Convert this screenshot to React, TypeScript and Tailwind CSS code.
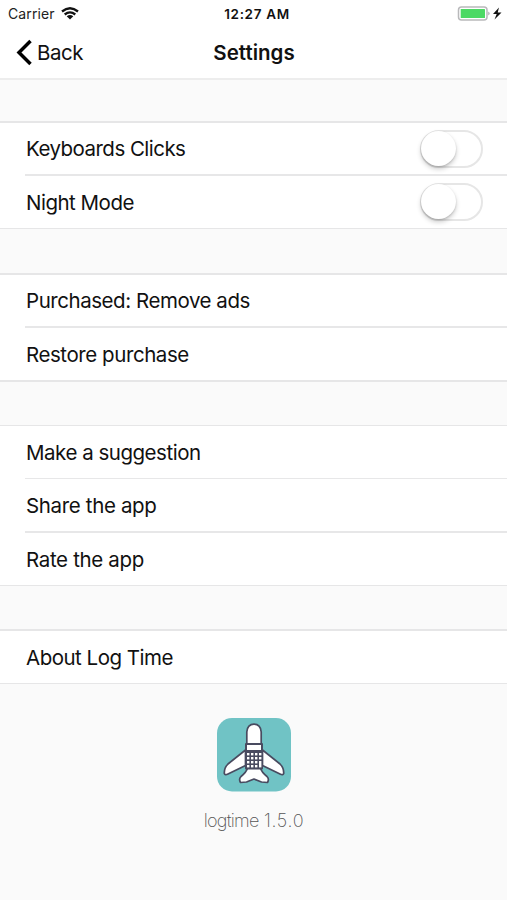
import React from "react";

type RowProps = { label: string; className: string; toggle?: boolean; spacing: string };

function Toggle() {
  return (
    <span className="mr-[24px] flex h-[38px] w-[63px] shrink-0 rounded-full border-2 border-[#e6e6e6] bg-white">
      <span className="-mt-px -ml-px h-[35px] w-[35px] rounded-full bg-white shadow-[0_3px_5px_rgba(0,0,0,0.2),0_1px_2px_rgba(0,0,0,0.14)]" />
    </span>
  );
}

function Row({ label, className, spacing, toggle }: RowProps) {
  return (
    <div className={`ml-[25px] flex items-center justify-between border-[#e7e7e8] ${className}`}>
      <span className={`whitespace-nowrap pl-px text-[20.5px] leading-none text-[#111] ${spacing}`}>{label}</span>
      {toggle && <Toggle />}
    </div>
  );
}

function Group({ className, children }: { className: string; children: React.ReactNode }) {
  return <section className={`border-[#e6e6e7] bg-white ${className}`}>{children}</section>;
}

function AppLogo() {
  return (
    <svg className="h-[74px] w-[74px]" viewBox="0 0 74 74">
      <rect width="74" height="73.500" rx="15" fill="#70c3c5" />
      <g fill="#fff" stroke="#494b60" strokeWidth="1.7" strokeLinejoin="round">
        <path d="M28.500 32 L11 46 Q7 50 7.300 55.500 Q8 57.500 11 56 L28.500 47.500Z" />
        <path d="M45.500 32 L63 46 Q67 50 66.700 55.500 Q66 57.500 63 56 L45.500 47.500Z" />
        <path d="M30.500 50 Q29.500 54 24 58.500 Q21.500 61 23.500 64.500 L29.500 64 L37 61 L44.500 64 L50.500 64.500 Q52.500 61 50 58.500 Q44.500 54 43.500 50Z" />
        <path d="M29.800 27 V14 Q30.500 6.200 37 6.200 Q43.500 6.200 44.200 14 V27Z" />
      </g>
      <rect x="28" y="25" width="18" height="26.500" rx="1" fill="#494b60" />
      <rect x="30" y="27" width="14" height="5" fill="#fff" />
      <g fill="#fff">
        {[35, 39, 43, 47].map((y, row) =>
          [30, 34, 38, 42].map((x, col) =>
            col === 3 && row === 3 ? null : (
              <rect key={`${x}-${y}`} x={x} y={y} width="2.400" height={col === 3 && row === 2 ? 6.4 : 2.4} />
            ),
          ),
        )}
      </g>
    </svg>
  );
}

export default function App() {
  return (
    <main className="flex h-[900px] w-[507px] flex-col overflow-hidden bg-[#fafafa] font-['Inter','Liberation_Sans',sans-serif]">
      <header className="h-[80px] shrink-0 border-b-2 border-[#ededed] bg-white">
        <div className="grid h-[27px] grid-cols-[1fr_auto_1fr] items-center">
          <div className="flex items-center gap-[6px] pl-[8px] text-[14px] tracking-[0.1px] text-[#222]">
            <span>Carrier</span>
            <svg className="h-[13px] w-[18px]" viewBox="0 0 18 13" fill="none" stroke="#111" strokeWidth="2.3">
              <path d="M1 4.500 Q9 -2 17 4.500 M3.700 7.500 Q9 3.300 14.300 7.500" />
              <path d="M5.700 9.200 Q9 6.600 12.300 9.200 L9 12.500Z" fill="#111" stroke="none" />
            </svg>
          </div>
          <span className="pt-px pl-[7px] text-[13.500px] font-semibold tracking-[0.65px] text-[#111]">12:27 AM</span>
          <div className="flex items-center justify-end pr-[5px]">
            <svg className="h-[16px] w-[45px]" viewBox="0 0 45 16">
              <rect x="1.500" y="1" width="28.500" height="13" rx="3" fill="#fff" stroke="#b9b9bb" strokeWidth="1.500" />
              <rect x="3.700" y="3" width="24.300" height="9" rx="0.500" fill="#4cd964" />
              <path d="M31.300 5.500 Q34 7.500 31.300 9.500Z" fill="#a5a5a7" />
              <path d="M42 1.500 L36 8 H39.700 L37.500 13.500 L44.500 6.500 H40.700Z" fill="#111" />
            </svg>
          </div>
        </div>
        <div className="grid h-[51px] grid-cols-[1fr_auto_1fr] items-center text-[20.500px] text-[#111]">
          <div className="flex items-center gap-[5px] pl-[16px]">
            <svg className="h-[28px] w-[16px]" viewBox="0 0 16 28" fill="none" stroke="#000" strokeWidth="3.500">
              <path d="M14.500 2 L3 13.500 L14.500 25" />
            </svg>
            <span className="pt-[2px] tracking-[-0.5px]">Back</span>
          </div>
          <h1 className="pt-[2px] pl-px font-semibold">Settings</h1>
        </div>
      </header>
      <div className="pt-[41px]">
        <Group className="border-t-2 border-b">
          <Row label="Keyboards Clicks" className="h-[53px] border-b-2" spacing="tracking-[-0.53px] pt-[2px]" toggle />
          <Row label="Night Mode" className="h-[52px]" spacing="tracking-[-0.5px] pt-[3px]" toggle />
        </Group>
        <Group className="mt-[44px] border-y-2">
          <Row label="Purchased: Remove ads" className="h-[53px] border-b-2" spacing="tracking-[-0.45px] pt-[2px]" />
          <Row label="Restore purchase" className="h-[52px]" spacing="tracking-[-0.43px] pt-[2px]" />
        </Group>
        <Group className="mt-[43px] border-y">
          <Row label="Make a suggestion" className="h-[53px] border-b" spacing="tracking-[-0.48px] pt-[2px]" />
          <Row label="Share the app" className="h-[54px] border-b-2" spacing="tracking-[-0.35px] pt-[3px]" />
          <Row label="Rate the app" className="h-[52px]" spacing="tracking-[-0.34px] pt-[3px]" />
        </Group>
        <Group className="mt-[43px] border-t-2 border-b">
          <Row label="About Log Time" className="h-[52px]" spacing="tracking-[-0.5px] pt-[2px]" />
        </Group>
      </div>
      <footer className="flex flex-col items-center pt-[34px]">
        <AppLogo />
        <p className="pt-[15px] pl-px text-[18px] font-extralight tracking-[-0.75px] text-[#555]">
          logtime <span className="pl-px tracking-[0.7px]">1.5.0</span>
        </p>
      </footer>
    </main>
  );
}
